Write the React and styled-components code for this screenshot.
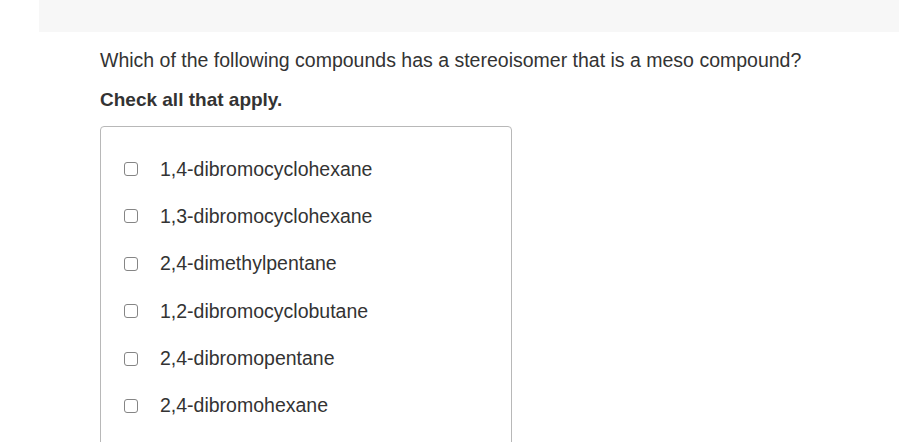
import React from 'react';
import styled, { createGlobalStyle } from 'styled-components';

const GlobalStyle = createGlobalStyle`
  html, body {
    margin: 0;
    padding: 0;
    background: #fff;
    font-family: "Liberation Sans", Arial, sans-serif;
    overflow: hidden;
  }
`;

const Page = styled.div`
  width: 899px;
  height: 442px;
  overflow: hidden;
`;

const TopBar = styled.div`
  margin-left: 39px;
  height: 32px;
  background: #f7f7f7;
`;

const Content = styled.div`
  padding: 16px 0 0 100px;
`;

const Question = styled.p`
  margin: 0;
  font-size: 19.5px;
  line-height: 24px;
  color: #333;
`;

const Instruction = styled.p`
  margin: 16px 0 0;
  font-size: 19px;
  line-height: 24px;
  font-weight: bold;
  color: #333;
`;

const OptionsBox = styled.div`
  margin-top: 14px;
  width: 412px;
  height: 340px;
  border: 1px solid #b8b8b8;
  border-radius: 4px;
  padding: 30px 0 0 23px;
  box-sizing: border-box;
  display: flex;
  flex-direction: column;
  gap: 23.4px;
`;

const Option = styled.label`
  display: flex;
  align-items: center;
  gap: 22px;
  height: 24px;
  font-size: 19.5px;
  color: #333;
`;

const Box = styled.span`
  width: 14px;
  height: 14px;
  box-sizing: border-box;
  border: 1.5px solid #858585;
  border-radius: 3px;
  background: #fff;
  flex: none;
`;

const options = [
  '1,4-dibromocyclohexane',
  '1,3-dibromocyclohexane',
  '2,4-dimethylpentane',
  '1,2-dibromocyclobutane',
  '2,4-dibromopentane',
  '2,4-dibromohexane',
];

export default function App() {
  return (
    <Page>
      <GlobalStyle />
      <TopBar />
      <Content>
        <Question>Which of the following compounds has a stereoisomer that is a meso compound?</Question>
        <Instruction>Check all that apply.</Instruction>
        <OptionsBox>
          {options.map((o) => (
            <Option key={o}>
              <Box />
              {o}
            </Option>
          ))}
        </OptionsBox>
      </Content>
    </Page>
  );
}
